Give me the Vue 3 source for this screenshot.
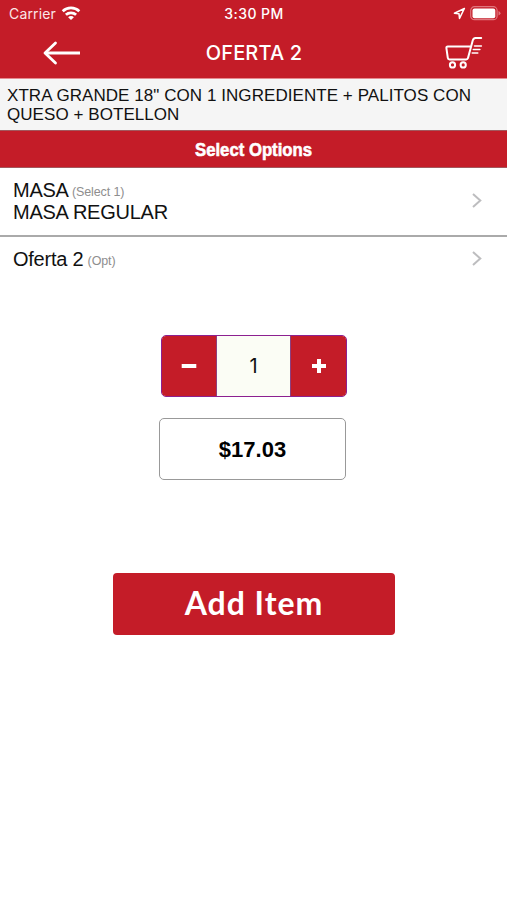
<script setup>
import { ref, computed } from 'vue'

const unitPrice = 17.03
const quantity = ref(1)
const total = computed(() => `$${(unitPrice * quantity.value).toFixed(2)}`)
const options = [
  { name: 'MASA', hint: '(Select 1)', choice: 'MASA REGULAR' },
  { name: 'Oferta 2', hint: '(Opt)', choice: '' },
]
const decrease = () => { if (quantity.value > 1) quantity.value-- }
</script>

<template>
  <main class="screen">
    <header class="top">
      <div class="status">
        <div class="carrier">
          <span class="carrier-name">Carrier</span>
          <svg class="wifi" width="20" height="15" viewBox="0 0 20 15" fill="none" stroke="#fff" stroke-width="2.7">
            <path d="M1.7 5.3C6.3.8 13.7.8 18.3 5.3" />
            <path d="M4.9 8.8c2.8-2.7 7.4-2.7 10.2 0" />
            <path d="M7.1 11.2c1.6-1.5 4.2-1.5 5.8 0L10 14z" fill="#fff" stroke="none" />
          </svg>
        </div>
        <span class="time">3:30 PM</span>
        <div class="indicators">
          <svg width="13" height="13" viewBox="0 0 13 13" fill="none" stroke="#fff" stroke-width="1.5" stroke-linejoin="round">
            <path d="M11.4 1.5 1.4 6.2l4.6.6.5 4.6z" />
          </svg>
          <svg width="31" height="15" viewBox="0 0 31 15">
            <rect x=".7" y=".7" width="26.4" height="13" rx="3.8" fill="none" stroke="#e0757d" stroke-width="1.2" />
            <rect x="2.5" y="2.5" width="22.8" height="9.8" rx="2" fill="#fff" />
            <path d="M28.5 5v4.5q2-.7 2-2.25T28.5 5" fill="#e0757d" />
          </svg>
        </div>
      </div>
      <nav class="nav">
        <svg class="back" width="38" height="24" viewBox="0 0 38 24" fill="none" stroke="#fff" stroke-width="2.8" stroke-linecap="round" stroke-linejoin="round">
          <path d="M12.5 2 2 12l10.5 10" />
          <path d="M2.5 12H37" stroke-linecap="butt" />
        </svg>
        <h1 class="title">OFERTA 2</h1>
        <svg class="cart" width="38" height="33" viewBox="0 0 38 33" fill="none" stroke="#fff" stroke-width="2" stroke-linecap="round" stroke-linejoin="round">
          <path d="M36.2 2h-5.7q-2 0-2.7 2.2L23 22q-.4 1.4-1.9 1.4H4.5q-1.5 0-1.7-1.6L1.4 12.2q-.2-1.6 1.4-1.6h23" />
          <path d="M29.5 9.9h6.9M28.3 13.5h6.6M27.2 17h5.6" stroke-width="1.5" />
          <circle cx="7.5" cy="28.9" r="2.6" />
          <circle cx="18.2" cy="28.9" r="2.6" />
        </svg>
      </nav>
    </header>
    <p class="description">XTRA GRANDE 18" CON 1 INGREDIENTE + PALITOS CON QUESO + BOTELLON</p>
    <h2 class="section"><span class="section-label">Select Options</span></h2>
    <div v-for="option in options" :key="option.name" class="option">
      <div class="option-text">
        <div class="option-name">{{ option.name }} <small class="hint">{{ option.hint }}</small></div>
        <div v-if="option.choice">{{ option.choice }}</div>
      </div>
      <svg width="12" height="16" viewBox="0 0 12 16" fill="none" stroke="#bdbdbf" stroke-width="2">
        <path d="m2 1 7.3 6.5L2 14" />
      </svg>
    </div>
    <div class="stepper">
      <button class="step" aria-label="Decrease" @click="decrease">
        <svg width="16" height="16" viewBox="0 0 16 16"><path d="M.7 8h14.6" stroke="#fff" stroke-width="4" /></svg>
      </button>
      <output class="quantity">{{ quantity }}</output>
      <button class="step" aria-label="Increase" @click="quantity++">
        <svg width="16" height="16" viewBox="0 0 16 16"><path d="M1 8h14M8 1v14" stroke="#fff" stroke-width="4" /></svg>
      </button>
    </div>
    <div class="price">{{ total }}</div>
    <button class="add">Add Item</button>
  </main>
</template>

<style>
body { margin: 0; background: #fff; }
</style>

<style scoped>
* { box-sizing: border-box; }
.screen {
  width: 507px;
  height: 900px;
  overflow: hidden;
  display: flex;
  flex-direction: column;
  background: #fff;
  color: #111;
  font-family: "Liberation Sans", Arial, sans-serif;
}
button { padding: 0; border: 0; color: #fff; background: #c41c28; }
.top {
  height: 79px;
  flex: none;
  background: #c41c28;
  border-bottom: 1px solid #e58a90;
  color: #fff;
  font-family: Inter, sans-serif;
}
.status {
  height: 27px;
  padding: 0 6px 0 9px;
  display: grid;
  grid-template-columns: 1fr auto 1fr;
  align-items: center;
  font-size: 14px;
}
.carrier { display: flex; align-items: center; gap: 5px; }
.carrier-name { font-size: 14px; letter-spacing: .15px; color: #fbe6e7; }
.time { font-weight: 500; letter-spacing: .45px; padding-right: 2px; }
.indicators { display: flex; justify-content: flex-end; align-items: center; gap: 4px; }
.nav {
  height: 51px;
  padding: 0 24px 0 43px;
  display: grid;
  grid-template-columns: 1fr auto 1fr;
  align-items: center;
}
.title { margin: 0 0 0 -18px; font-size: 20px; font-weight: 500; letter-spacing: .15px; }
.cart { justify-self: end; margin-top: -1px; }
.description {
  margin: 0;
  height: 51px;
  flex: none;
  padding: 7px 20px 0 7px;
  background: #f5f5f5;
  font-size: 17px;
  line-height: 19px;
  letter-spacing: .06px;
}
.section {
  margin: 0;
  height: 38px;
  flex: none;
  display: flex;
  align-items: center;
  justify-content: center;
  background: #c41c28;
  border-top: 1px solid #a2585d;
  border-bottom: 1px solid #a2585d;
  color: #fff;
}
.section-label {
  font: bold 19px "Liberation Sans", sans-serif;
  -webkit-text-stroke: .6px #fff;
  transform: scaleX(.88);
  padding-top: 1px;
}
.option {
  display: flex;
  align-items: center;
  justify-content: space-between;
  height: 69px;
  flex: none;
  padding: 0 24px 1px 13px;
  border-bottom: 2px solid #aaa;
  font-size: 20px;
  line-height: 22px;
  letter-spacing: -.25px;
}
.option + .option { height: 44px; border-bottom: 0; }
.hint { color: #8e8e8e; font-size: 12.5px; line-height: 1; letter-spacing: -.1px; margin-left: -1px; vertical-align: 1px; }
.stepper {
  display: flex;
  flex: none;
  width: 186px;
  height: 62px;
  margin: 54px 0 0 161px;
  border: 1px solid #8c2090;
  border-radius: 5px;
  overflow: hidden;
}
.step { width: 54px; display: grid; place-items: center; }
.step:last-child { width: 55px; }
.quantity {
  flex: 1;
  display: grid;
  place-items: center;
  border: solid #8c4080;
  border-width: 0 1px;
  background: #fbfdf5;
  font: 20px Inter, sans-serif;
}
.price {
  display: grid;
  place-items: center;
  flex: none;
  width: 187px;
  height: 62px;
  margin: 21px 0 0 159px;
  padding-top: 1px;
  border: 1.5px solid #999;
  border-radius: 5px;
  color: #000;
  font-size: 22px;
  font-weight: bold;
}
.add {
  flex: none;
  width: 282px;
  height: 62px;
  margin: 93px 0 0 113px;
  padding-bottom: 3px;
  border-radius: 4px;
  font: bold 32px Lato, sans-serif;
  letter-spacing: 1px;
}
</style>
